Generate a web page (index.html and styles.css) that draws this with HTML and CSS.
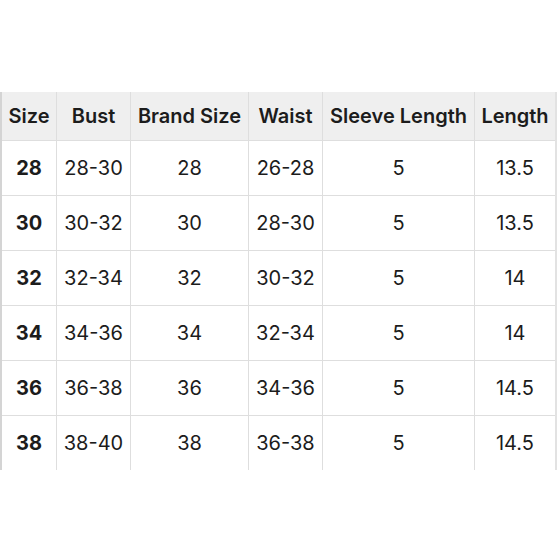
FILE: index.html
```html
<!DOCTYPE html>
<html>
<head>
<meta charset="utf-8">
<link rel="stylesheet" href="styles.css">
</head>
<body>
<div class="wrap">
<table class="sizes">
<thead>
<tr><th>Size</th><th>Bust</th><th>Brand Size</th><th>Waist</th><th>Sleeve Length</th><th>Length</th></tr>
</thead>
<tbody>
<tr><td class="sz">28</td><td>28-30</td><td>28</td><td>26-28</td><td>5</td><td>13.5</td></tr>
<tr><td class="sz">30</td><td>30-32</td><td>30</td><td>28-30</td><td>5</td><td>13.5</td></tr>
<tr><td class="sz">32</td><td>32-34</td><td>32</td><td>30-32</td><td>5</td><td>14</td></tr>
<tr><td class="sz">34</td><td>34-36</td><td>34</td><td>32-34</td><td>5</td><td>14</td></tr>
<tr><td class="sz">36</td><td>36-38</td><td>36</td><td>34-36</td><td>5</td><td>14.5</td></tr>
<tr class="last"><td class="sz">38</td><td>38-40</td><td>38</td><td>36-38</td><td>5</td><td>14.5</td></tr>
</tbody>
</table>
</div>
</body>
</html>
```
FILE: styles.css
```css
html, body { margin: 0; padding: 0; background: #fff; }
.wrap { padding-top: 92px; }
.sizes {
  border-collapse: collapse;
  font-family: Inter, "Liberation Sans", sans-serif;
  color: #1c1c1c;
  width: 557px;
  border-left: 2px solid #d4d4d4;
  border-right: 2px solid #e2e2e2;
}
.sizes th, .sizes td {
  text-align: center;
  padding: 0;
  border: 1px solid #dedede;
  white-space: nowrap;
}
.sizes th {
  background: #efefef;
  font-weight: 600;
  font-size: 20px;
  height: 48px;
}
.sizes td { font-size: 20px; height: 54px; }
.sizes td.sz { font-weight: 700; }
.sizes th:nth-child(1) { width: 54px; }
.sizes th:nth-child(2) { width: 73px; }
.sizes th:nth-child(3) { width: 117px; }
.sizes th:nth-child(4) { width: 73px; }
.sizes th:nth-child(5) { width: 151px; }
.sizes thead th { border-top: none; }
.sizes tr.last td { border-bottom: none; }
```
